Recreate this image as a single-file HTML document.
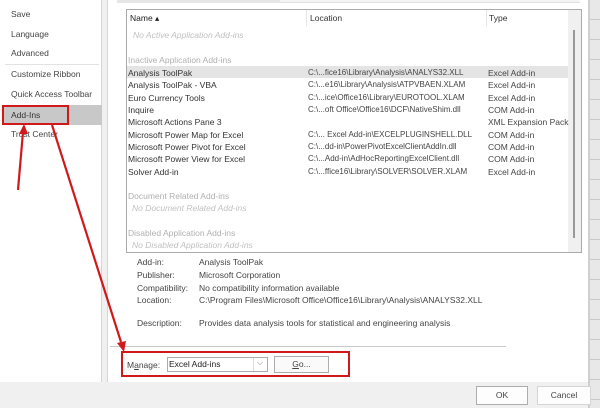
<!DOCTYPE html>
<html><head><meta charset="utf-8"><style>
*{margin:0;padding:0;box-sizing:border-box}
body{width:600px;height:408px;overflow:hidden;background:#f0f0f0;font-family:"Liberation Sans",sans-serif;font-size:8.5px;color:#444;position:relative}
.a{position:absolute;white-space:nowrap}
.g{color:#b0b0b0}
.i{font-style:italic;color:#c0c0c0}
</style></head><body>
<div class="a" style="left:588px;top:0;width:12px;height:408px;background:repeating-linear-gradient(#e8e8e8 0 19px,#c8c8c8 19px 20px);border-left:2px solid #cfcfcf"></div>
<div class="a" style="left:0;top:0;width:102px;height:382px;background:#fff;border-right:1px solid #d6d6d6"></div>
<div class="a" style="left:102px;top:0;width:6px;height:382px;background:#f0f0f0;border-right:1px solid #d6d6d6"></div>
<div class="a" style="left:108px;top:0;width:480px;height:382px;background:#fff"></div>
<div class="a" style="left:117px;top:0;width:165px;height:3px;background:#e6e6e6"></div>
<div class="a" style="left:280px;top:0;width:300px;height:3px;background:#f4f4f4;border-bottom:1px solid #e0e0e0"></div>
<div class="a" style="left:11px;top:9px">Save</div>
<div class="a" style="left:11px;top:29px">Language</div>
<div class="a" style="left:11px;top:48px">Advanced</div>
<div class="a" style="left:5px;top:64px;width:94px;height:1px;background:#e2e2e2"></div>
<div class="a" style="left:11px;top:69px">Customize Ribbon</div>
<div class="a" style="left:11px;top:89px">Quick Access Toolbar</div>
<div class="a" style="left:2px;top:105px;width:100px;height:20px;background:#c8c8c8"></div>
<div class="a" style="left:11px;top:110px;color:#333">Add-Ins</div>
<div class="a" style="left:2px;top:105px;width:67px;height:20px;border:2px solid #d0191b"></div>
<div class="a" style="left:11px;top:129px">Trust Center</div>
<div class="a" style="left:126px;top:9px;width:456px;height:244px;border:1px solid #ababab;background:#fff"></div>
<div class="a" style="left:306px;top:10px;width:1px;height:16px;background:#e5e5e5"></div>
<div class="a" style="left:486px;top:10px;width:1px;height:16px;background:#e5e5e5"></div>
<div class="a" style="left:568px;top:10px;width:13px;height:242px;background:#f0f0f0"></div>
<div class="a" style="left:573px;top:30px;width:2px;height:208px;background:#9a9a9a"></div>
<div class="a" style="left:130px;top:13px;color:#222">Name ▴</div>
<div class="a" style="left:310px;top:13px;color:#333">Location</div>
<div class="a" style="left:489px;top:13px;color:#333">Type</div>
<div class="a i" style="left:133px;top:30px">No Active Application Add-ins</div>
<div class="a g" style="left:128px;top:55px">Inactive Application Add-ins</div>
<div class="a" style="left:127px;top:66px;width:441px;height:12px;background:#e4e4e4"></div>
<div class="a" style="left:128px;top:67px;line-height:12.35px;color:#333">Analysis ToolPak<br>Analysis ToolPak - VBA<br>Euro Currency Tools<br>Inquire<br>Microsoft Actions Pane 3<br>Microsoft Power Map for Excel<br>Microsoft Power Pivot for Excel<br>Microsoft Power View for Excel<br>Solver Add-in</div>
<div class="a" style="left:308px;top:67px;line-height:12.35px;font-size:8px;color:#444">C:\...fice16\Library\Analysis\ANALYS32.XLL<br>C:\...e16\Library\Analysis\ATPVBAEN.XLAM<br>C:\...ice\Office16\Library\EUROTOOL.XLAM<br>C:\...oft Office\Office16\DCF\NativeShim.dll<br>&nbsp;<br>C:\... Excel Add-in\EXCELPLUGINSHELL.DLL<br>C:\...dd-in\PowerPivotExcelClientAddIn.dll<br>C:\...Add-in\AdHocReportingExcelClient.dll<br>C:\...ffice16\Library\SOLVER\SOLVER.XLAM</div>
<div class="a" style="left:488px;top:67px;line-height:12.35px;color:#444">Excel Add-in<br>Excel Add-in<br>Excel Add-in<br>COM Add-in<br>XML Expansion Pack<br>COM Add-in<br>COM Add-in<br>COM Add-in<br>Excel Add-in</div>
<div class="a g" style="left:128px;top:191px">Document Related Add-ins</div>
<div class="a i" style="left:132px;top:203px">No Document Related Add-ins</div>
<div class="a g" style="left:128px;top:228px">Disabled Application Add-ins</div>
<div class="a i" style="left:132px;top:240px">No Disabled Application Add-ins</div>
<div class="a" style="left:137px;top:256px;line-height:12.8px">Add-in:<br>Publisher:<br>Compatibility:<br>Location:</div>
<div class="a" style="left:199px;top:256px;line-height:12.8px">Analysis ToolPak<br>Microsoft Corporation<br>No compatibility information available<br>C:\Program Files\Microsoft Office\Office16\Library\Analysis\ANALYS32.XLL</div>
<div class="a" style="left:137px;top:318px">Description:</div>
<div class="a" style="left:199px;top:318px">Provides data analysis tools for statistical and engineering analysis</div>
<div class="a" style="left:110px;top:346px;width:396px;height:1px;background:#c8c8c8"></div>
<div class="a" style="left:127px;top:360px">M<u>a</u>nage:</div>
<div class="a" style="left:167px;top:357px;width:101px;height:15px;border:1px solid #acacac;background:#fff"></div>
<div class="a" style="left:169px;top:359px;color:#222">Excel Add-ins</div>
<div class="a" style="left:253px;top:358px;width:1px;height:13px;background:#ddd"></div>
<div class="a" style="left:257px;top:358px;color:#888;font-size:8px">⌵</div>
<div class="a" style="left:274px;top:356px;width:55px;height:17px;border:1px solid #adadad;background:#fafafa;text-align:center;line-height:15px"><u>G</u>o...</div>
<div class="a" style="left:121px;top:351px;width:229px;height:26px;border:2px solid #d0191b"></div>
<div class="a" style="left:476px;top:386px;width:52px;height:19px;border:1px solid #adadad;background:#fdfdfd;text-align:center;line-height:17px">OK</div>
<div class="a" style="left:537px;top:386px;width:54px;height:19px;border:1px solid #d5d5d5;background:#fdfdfd;text-align:center;line-height:17px">Cancel</div>
<svg class="a" style="left:0;top:0" width="600" height="408">
<g stroke="#d0191b" stroke-width="2.2" fill="#d0191b">
<line x1="18" y1="190" x2="23" y2="132"/>
<polygon points="24,124 19,134 28,134" stroke="none"/>
<line x1="52" y1="125" x2="121" y2="342"/>
<polygon points="124,352 117,343 126,341" stroke="none"/>
</g></svg>
</body></html>
